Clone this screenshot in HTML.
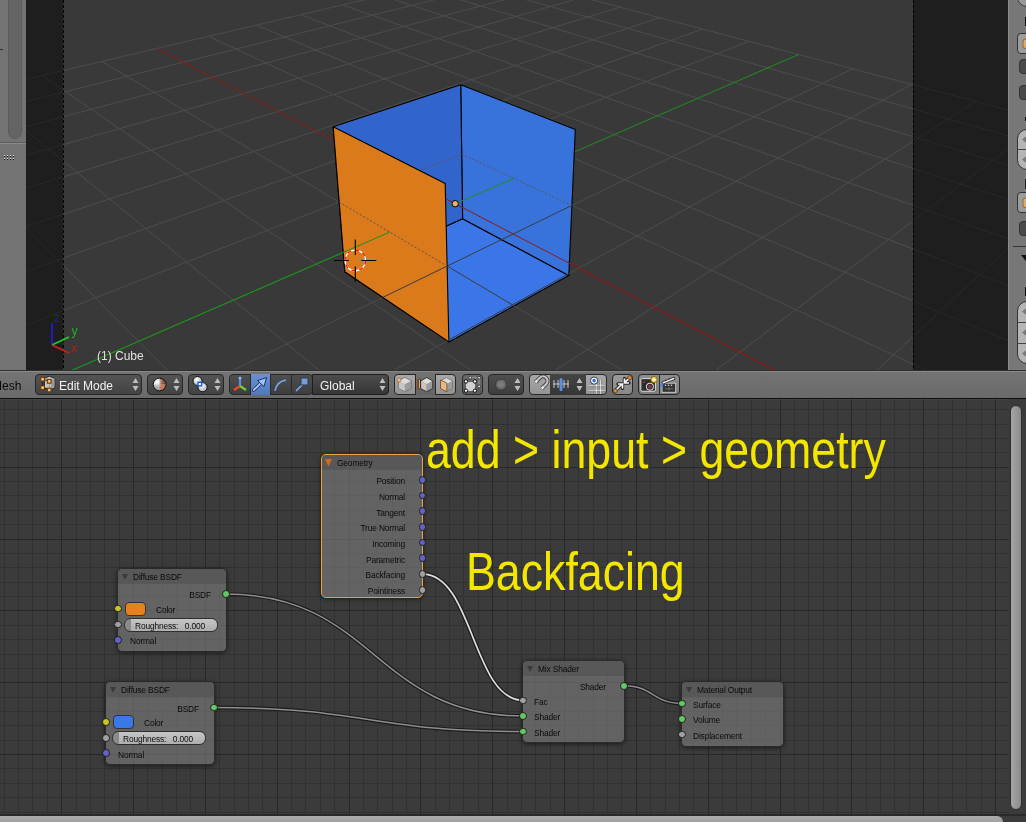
<!DOCTYPE html>
<html><head><meta charset="utf-8"><style>
*{box-sizing:border-box}
body{margin:0;width:1026px;height:822px;overflow:hidden;position:relative;background:#3b3b3b;font-family:"Liberation Sans",sans-serif}
.abs{position:absolute}
.btn{border:1px solid #262626}
.sock{border-radius:50%;border:1px solid #1e1e1e}
.lbl{font-size:8.4px;line-height:10px;letter-spacing:-0.15px;white-space:nowrap;will-change:transform}
.node{border-radius:5px;background:rgba(125,125,125,0.62);box-shadow:0 1px 4px rgba(0,0,0,0.55)}
.nhead{background:rgba(80,80,80,0.55);border-radius:4px 4px 0 0}
.rough{border-radius:6.3px;background:linear-gradient(90deg,#8a8a8a 0 6px,transparent 6px),linear-gradient(#c6c6c6,#aeaeae);border:1px solid #2e2e2e}
.ytxt{font-size:54px;line-height:60px;color:#f3e700;white-space:nowrap;transform-origin:0 0;transform:scaleX(0.828)}
.rp{left:8px;width:30px;border-radius:4px;border:1px solid #333}
.light{background:#9c9c9c}
.dark{background:#4a4a4a}
.num{background:#b5b5b5;border-radius:10px}
</style></head><body>
<svg width="1026" height="370" style="position:absolute;left:0;top:0;will-change:transform">
<defs><clipPath id="silc"><path d="M333.2 126.8L460.7 84.7L575.3 129.6L568.8 275.4L448.9 341.9L344.8 271.8Z"/></clipPath></defs>
<rect width="1026" height="370" fill="#393939"/>
<g stroke="#4d4d4d" stroke-width="1" fill="none"><path d="M-451.4 191.2L101.8 61.4M101.8 61.4L208.6 36.3M208.6 36.3L485.3 -28.6M-451.4 191.2L-430.9 504.6M-430.9 504.6L-418.9 687.5M-418.9 687.5L-146.3 4841.2M-449.6 219.8L127.0 76.3M127.0 76.3L236.1 49.1M236.1 49.1L515.8 -20.5M-348.3 167.0L-267.1 440.3M-267.1 440.3L-222.1 591.8M-222.1 591.8L484.3 2969.4M-447.4 252.1L154.4 92.5M154.4 92.5L265.9 63.0M265.9 63.0L548.3 -11.9M-255.2 145.1L-128.0 385.7M-128.0 385.7L-60.6 513.2M-60.6 513.2L777.6 2098.9M-445.0 288.8L184.4 110.3M184.4 110.3L298.3 78.1M298.3 78.1L583.0 -2.7M-170.6 125.3L-8.4 338.7M-8.4 338.7L74.3 447.5M74.3 447.5L947.1 1595.7M-442.3 330.9L217.4 129.9M217.4 129.9L333.6 94.5M333.6 94.5L620.1 7.2M-93.5 107.2L95.5 297.8M95.5 297.8L188.7 391.8M188.7 391.8L1057.5 1267.9M-439.1 379.6L253.8 151.5M253.8 151.5L372.2 112.5M372.2 112.5L659.9 17.7M-22.9 90.6L186.7 262.0M186.7 262.0L287.0 344.0M287.0 344.0L1135.2 1037.4M-435.3 436.8L294.2 175.4M294.2 175.4L414.7 132.2M414.7 132.2L702.7 29.0M42.0 75.4L267.4 230.3M267.4 230.3L372.3 302.5M372.3 302.5L1192.8 866.4M-430.9 504.6L339.2 202.1M339.2 202.1L461.6 154.0M461.6 154.0L748.8 41.3M101.8 61.4L339.2 202.1M339.2 202.1L447.1 266.1M447.1 266.1L1237.2 734.6M-418.9 687.5L447.1 266.1M447.1 266.1L571.9 205.4M571.9 205.4L852.6 68.8M208.6 36.3L461.6 154.0M461.6 154.0L571.9 205.4M571.9 205.4L1301.2 544.6M-410.5 814.8L512.4 304.8M512.4 304.8L637.3 235.8M637.3 235.8L911.4 84.4M256.4 25.1L514.2 133.4M514.2 133.4L624.6 179.7M624.6 179.7L1325.0 473.9M-399.7 980.5L587.6 349.4M587.6 349.4L711.4 270.2M711.4 270.2L975.5 101.4M301.0 14.7L562.1 114.6M562.1 114.6L672.0 156.7M672.0 156.7L1345.1 414.3M-384.9 1205.0L675.0 401.3M675.0 401.3L796.0 309.6M796.0 309.6L1045.9 120.0M342.6 4.9L605.8 97.4M605.8 97.4L715.0 135.8M715.0 135.8L1362.3 363.3M-363.8 1526.2L778.1 462.3M778.1 462.3L893.4 354.9M893.4 354.9L1123.4 140.6M381.7 -4.3L646.0 81.6M646.0 81.6L754.0 116.7M754.0 116.7L1377.1 319.3M-331.2 2023.9L901.2 535.4M901.2 535.4L1006.9 407.7M1006.9 407.7L1209.2 163.3M418.3 -12.9L683.0 67.1M683.0 67.1L789.7 99.4M789.7 99.4L1390.1 280.9M-273.8 2898.8L1051.0 624.2M1051.0 624.2L1140.8 470.0M1140.8 470.0L1304.7 188.6M452.8 -21.0L717.1 53.7M717.1 53.7L822.5 83.4M822.5 83.4L1401.5 247.0M-146.3 4841.2L1237.2 734.6M1237.2 734.6L1301.2 544.6M1301.2 544.6L1411.6 217.0M485.3 -28.6L748.8 41.3M748.8 41.3L852.6 68.8M852.6 68.8L1411.6 217.0"/></g>
<path d="M157.2 48.4L403.6 176.8M403.6 176.8L513.2 234.0M513.2 234.0L1272.5 629.8" stroke="#8e1a1a" stroke-width="1"/>
<path d="M-425.5 586.6L389.8 232.1M389.8 232.1L513.7 178.3M513.7 178.3L798.6 54.5" stroke="#1f8f1f" stroke-width="1"/>
<g stroke="#000" stroke-width="1.1" stroke-linejoin="round">
<path d="M344.8 271.8L462.6 218.7L568.8 275.4L448.9 341.9Z" fill="#3b76e8"/>
<path d="M462.6 218.7L568.8 275.4L575.3 129.6L460.7 84.7Z" fill="#3873dc"/>
<path d="M344.8 271.8L462.6 218.7L460.7 84.7L333.2 126.8Z" fill="#3265cb"/>
</g>
<g fill="none" stroke-width="1">
<path d="M447.1 266.1L571.9 205.4" stroke="#3c3c3c"/>
<path d="M339.2 202.1L461.6 154.0M461.6 154.0L571.9 205.4" stroke="#555" stroke-dasharray="2 2"/>
<path d="M403.6 176.8L513.2 234.0" stroke="#8e1a1a"/>
<path d="M389.8 232.1L513.7 178.3" stroke="#1f8f1f"/>
</g>
<path d="M344.8 271.8L448.9 341.9L445.2 183.4L333.2 126.8Z" fill="#da7a1a" stroke="#000" stroke-width="1.1" stroke-linejoin="round"/>
<g fill="none" stroke-width="1">
<path d="M339.2 202.1L447.1 266.1" stroke="#555" stroke-dasharray="2 2"/>
<path d="M-451.4 191.2L101.8 61.4M-451.4 191.2L-430.9 504.6M-430.9 504.6L-418.9 687.5M-418.9 687.5L-146.3 4841.2M-449.6 219.8L127.0 76.3M-348.3 167.0L-267.1 440.3M-267.1 440.3L-222.1 591.8M-222.1 591.8L484.3 2969.4M-447.4 252.1L154.4 92.5M-255.2 145.1L-128.0 385.7M-128.0 385.7L-60.6 513.2M-60.6 513.2L777.6 2098.9M-445.0 288.8L184.4 110.3M-170.6 125.3L-8.4 338.7M-8.4 338.7L74.3 447.5M74.3 447.5L947.1 1595.7M-442.3 330.9L217.4 129.9M-93.5 107.2L95.5 297.8M95.5 297.8L188.7 391.8M188.7 391.8L1057.5 1267.9M-439.1 379.6L253.8 151.5M-22.9 90.6L186.7 262.0M186.7 262.0L287.0 344.0M287.0 344.0L1135.2 1037.4M-435.3 436.8L294.2 175.4M42.0 75.4L267.4 230.3M267.4 230.3L372.3 302.5M372.3 302.5L1192.8 866.4M-430.9 504.6L339.2 202.1M447.1 266.1L1237.2 734.6M-418.9 687.5L447.1 266.1M571.9 205.4L1301.2 544.6M-410.5 814.8L512.4 304.8M512.4 304.8L637.3 235.8M637.3 235.8L911.4 84.4M624.6 179.7L1325.0 473.9M-399.7 980.5L587.6 349.4M587.6 349.4L711.4 270.2M711.4 270.2L975.5 101.4M672.0 156.7L1345.1 414.3M-384.9 1205.0L675.0 401.3M675.0 401.3L796.0 309.6M796.0 309.6L1045.9 120.0M715.0 135.8L1362.3 363.3M-363.8 1526.2L778.1 462.3M778.1 462.3L893.4 354.9M893.4 354.9L1123.4 140.6M754.0 116.7L1377.1 319.3M-331.2 2023.9L901.2 535.4M901.2 535.4L1006.9 407.7M1006.9 407.7L1209.2 163.3M789.7 99.4L1390.1 280.9M-273.8 2898.8L1051.0 624.2M1051.0 624.2L1140.8 470.0M1140.8 470.0L1304.7 188.6M822.5 83.4L1401.5 247.0M-146.3 4841.2L1237.2 734.6M1237.2 734.6L1301.2 544.6M1301.2 544.6L1411.6 217.0M852.6 68.8L1411.6 217.0" stroke="#3c3c3c" clip-path="url(#silc)"/>
<path d="M513.2 234.0L1272.5 629.8" stroke="#8e1a1a"/>
<path d="M-425.5 586.6L389.8 232.1" stroke="#1f8f1f"/>
</g>
<circle cx="455.2" cy="203.7" r="3.2" fill="#f0b070" stroke="#000" stroke-width="1"/>
<g transform="translate(355.3 260.5)">
<circle r="10.3" fill="none" stroke="#fff" stroke-width="1.2"/>
<circle r="10.3" fill="none" stroke="#f00" stroke-width="1.2" stroke-dasharray="4 4"/>
<path d="M-21 0H-6.5M6 0H21M0 -21V-5.5M0 6V21" stroke="#000" stroke-width="1.1"/>
</g>
<rect x="26" y="0" width="37" height="370" fill="rgba(0,0,0,0.475)"/>
<rect x="913" y="0" width="95" height="370" fill="rgba(0,0,0,0.475)"/>
<path d="M63.5 0V370M913.5 0V370" stroke="#000" stroke-width="1" stroke-dasharray="3 2"/>
<g stroke-width="1.6" fill="none">
<path d="M52 345L52 323" stroke="#2020e0"/>
<path d="M52 345L69 337" stroke="#20d020"/>
<path d="M52 345L69 353" stroke="#d02020"/>
</g>
<text x="53.5" y="321.5" font-family="Liberation Sans, sans-serif" font-size="12.5" fill="#1818c8">z</text>
<text x="71.5" y="335" font-family="Liberation Sans, sans-serif" font-size="12.5" fill="#20b020">y</text>
<text x="71" y="351.5" font-family="Liberation Sans, sans-serif" font-size="12.5" fill="#b02020">x</text>
<text x="97" y="360" font-family="Liberation Sans, sans-serif" font-size="12" fill="#e0e0e0">(1) Cube</text>
</svg>
<div class="abs" style="left:0;top:0;width:26px;height:370px;background:#737373">
<div class="abs" style="left:8px;top:-8px;width:14px;height:147px;border-radius:7px;background:#646464;border:1px solid #5c5c5c"></div>
<div class="abs" style="left:0;top:142px;width:26px;height:1px;background:#5c5c5c"></div><div class="abs" style="left:0;top:143px;width:26px;height:1px;background:#8a8a8a"></div>
<div class="abs" style="left:0;top:49px;width:3px;height:1px;background:#333"></div>
<svg class="abs" style="left:0;top:0" width="20" height="170"><rect x="4" y="155" width="1" height="1" fill="#e0e0e0"/><rect x="4" y="156" width="1" height="1" fill="#151515"/><rect x="4" y="158" width="1" height="1" fill="#e0e0e0"/><rect x="4" y="159" width="1" height="1" fill="#151515"/><rect x="7" y="155" width="1" height="1" fill="#e0e0e0"/><rect x="7" y="156" width="1" height="1" fill="#151515"/><rect x="7" y="158" width="1" height="1" fill="#e0e0e0"/><rect x="7" y="159" width="1" height="1" fill="#151515"/><rect x="10" y="155" width="1" height="1" fill="#e0e0e0"/><rect x="10" y="156" width="1" height="1" fill="#151515"/><rect x="10" y="158" width="1" height="1" fill="#e0e0e0"/><rect x="10" y="159" width="1" height="1" fill="#151515"/><rect x="13" y="155" width="1" height="1" fill="#e0e0e0"/><rect x="13" y="156" width="1" height="1" fill="#151515"/><rect x="13" y="158" width="1" height="1" fill="#e0e0e0"/><rect x="13" y="159" width="1" height="1" fill="#151515"/></svg>
</div>
<div class="abs" style="left:1008px;top:0;width:18px;height:370px;background:#777;border-left:1px solid #8c8c8c">
<div class="abs" style="left:8px;top:-14px;width:30px;height:21px;border-radius:10px;border:1px solid #3a3a3a;background:#999"></div>
<div class="abs" style="left:16px;top:17px;width:3px;height:9px;background:#111"></div>
<div class="abs rp light" style="top:33px;height:21px"></div><svg class="abs" style="left:12px;top:37px" width="8" height="13"><path d="M2 3L6 1.5L8 3V11L6 12L2 10.5Z" fill="#e8a860" stroke="#7a5a3a" stroke-width="0.8"/></svg>
<div class="abs rp dark" style="left:10px;top:59px;height:15px"></div>
<div class="abs rp dark" style="left:10px;top:85px;height:15px"></div>
<div class="abs" style="left:16px;top:117px;width:3px;height:4px;background:#111"></div>
<div class="abs rp num" style="top:129px;height:41px"></div>
<div class="abs" style="left:8px;top:149px;width:12px;height:1px;background:#444"></div><svg class="abs" style="left:11px;top:135px" width="7" height="9"><path d="M2 4.5L7 0.5V8.5Z" fill="#7a7a7a"/></svg><svg class="abs" style="left:11px;top:155px" width="7" height="9"><path d="M2 4.5L7 0.5V8.5Z" fill="#7a7a7a"/></svg>
<div class="abs" style="left:16px;top:179px;width:3px;height:10px;background:#222"></div>
<div class="abs rp light" style="top:192px;height:21px"></div><svg class="abs" style="left:12px;top:196px" width="8" height="13"><path d="M2 3L6 1.5L8 3V11L6 12L2 10.5Z" fill="#e8a860" stroke="#7a5a3a" stroke-width="0.8"/></svg>
<div class="abs rp dark" style="left:10px;top:221px;height:15px"></div>
<div class="abs" style="left:4px;top:246px;width:14px;height:1px;background:#333"></div>
<svg class="abs" style="left:12px;top:255px" width="8" height="10"><path d="M0 0H8V10Z" fill="#111"/></svg>
<div class="abs" style="left:16px;top:287px;width:3px;height:9px;background:#111"></div>
<div class="abs rp num" style="top:301px;height:63px"></div>
<div class="abs" style="left:8px;top:322px;width:12px;height:1px;background:#444"></div>
<div class="abs" style="left:8px;top:343px;width:12px;height:1px;background:#444"></div><svg class="abs" style="left:11px;top:307px" width="7" height="9"><path d="M2 4.5L7 0.5V8.5Z" fill="#7a7a7a"/></svg><svg class="abs" style="left:11px;top:328px" width="7" height="9"><path d="M2 4.5L7 0.5V8.5Z" fill="#7a7a7a"/></svg><svg class="abs" style="left:11px;top:349px" width="7" height="9"><path d="M2 4.5L7 0.5V8.5Z" fill="#7a7a7a"/></svg>
</div>
<svg class="abs" style="left:0;top:0" width="1026" height="822">
<rect x="0" y="398" width="1026" height="424" fill="#3b3b3b"/>
<path d="M4.5 399V814M18.5 399V814M32.5 399V814M47.5 399V814M76.5 399V814M90.5 399V814M104.5 399V814M119.5 399V814M147.5 399V814M162.5 399V814M176.5 399V814M190.5 399V814M219.5 399V814M234.5 399V814M248.5 399V814M262.5 399V814M291.5 399V814M305.5 399V814M320.5 399V814M334.5 399V814M363.5 399V814M377.5 399V814M392.5 399V814M406.5 399V814M435.5 399V814M449.5 399V814M463.5 399V814M478.5 399V814M507.5 399V814M521.5 399V814M535.5 399V814M550.5 399V814M578.5 399V814M593.5 399V814M607.5 399V814M621.5 399V814M650.5 399V814M665.5 399V814M679.5 399V814M693.5 399V814M722.5 399V814M736.5 399V814M751.5 399V814M765.5 399V814M794.5 399V814M808.5 399V814M823.5 399V814M837.5 399V814M866.5 399V814M880.5 399V814M894.5 399V814M909.5 399V814M938.5 399V814M952.5 399V814M966.5 399V814M981.5 399V814M0 409.5H1009M0 424.5H1009M0 438.5H1009M0 452.5H1009M0 481.5H1009M0 495.5H1009M0 510.5H1009M0 524.5H1009M0 553.5H1009M0 567.5H1009M0 582.5H1009M0 596.5H1009M0 625.5H1009M0 639.5H1009M0 654.5H1009M0 668.5H1009M0 697.5H1009M0 711.5H1009M0 725.5H1009M0 740.5H1009M0 768.5H1009M0 783.5H1009M0 797.5H1009M0 812.5H1009" stroke="#313131" stroke-width="1"/>
<path d="M61.5 399V814M133.5 399V814M205.5 399V814M277.5 399V814M349.5 399V814M420.5 399V814M492.5 399V814M564.5 399V814M636.5 399V814M708.5 399V814M780.5 399V814M851.5 399V814M923.5 399V814M995.5 399V814M0 467.5H1009M0 539.5H1009M0 610.5H1009M0 682.5H1009M0 754.5H1009" stroke="#282828" stroke-width="1"/>
</svg><svg class="abs" style="left:0;top:0" width="1026" height="822"><path d="M226.2 594.1C374.6 594.1 374.6 716.0 523.0 716.0" stroke="#161616" stroke-width="3.8" fill="none" opacity="0.85"/><path d="M226.2 594.1C374.6 594.1 374.6 716.0 523.0 716.0" stroke="#8e8e8e" stroke-width="1.5" fill="none"/><path d="M213.7 707.5C368.4 707.5 368.4 731.6 523.0 731.6" stroke="#161616" stroke-width="3.8" fill="none" opacity="0.85"/><path d="M213.7 707.5C368.4 707.5 368.4 731.6 523.0 731.6" stroke="#8e8e8e" stroke-width="1.5" fill="none"/><path d="M422.7 574.1C472.9 574.1 472.9 700.3 523.0 700.3" stroke="#161616" stroke-width="4.0" fill="none" opacity="0.85"/><path d="M422.7 574.1C472.9 574.1 472.9 700.3 523.0 700.3" stroke="#dedede" stroke-width="1.7" fill="none"/><path d="M624.3 685.7C653.0 685.7 653.0 703.4 681.8 703.4" stroke="#161616" stroke-width="3.8" fill="none" opacity="0.85"/><path d="M624.3 685.7C653.0 685.7 653.0 703.4 681.8 703.4" stroke="#8e8e8e" stroke-width="1.5" fill="none"/></svg><div class="abs node" style="left:320.8px;top:454.0px;width:102.6px;height:144.1px;border:1px solid #e8a040">
<div class="abs nhead" style="left:0;top:0;width:100%;height:15px"></div>
<svg class="abs" style="left:3.2px;top:4px" width="8" height="9"><path d="M0 0H7L3.5 7.7Z" fill="#d8651e"/></svg>
<div class="abs lbl" style="left:15.3px;top:3.3px;color:#0a0a0a">Geometry</div>
</div><div class="abs lbl" style="left:325.0px;top:476.1px;width:80px;text-align:right;color:#0a0a0a">Position</div><div class="abs sock" style="left:418.7px;top:475.9px;width:7.8px;height:7.8px;background:#6363c7"></div><div class="abs lbl" style="left:325.0px;top:491.8px;width:80px;text-align:right;color:#0a0a0a">Normal</div><div class="abs sock" style="left:418.7px;top:491.6px;width:7.8px;height:7.8px;background:#6363c7"></div><div class="abs lbl" style="left:325.0px;top:507.5px;width:80px;text-align:right;color:#0a0a0a">Tangent</div><div class="abs sock" style="left:418.7px;top:507.3px;width:7.8px;height:7.8px;background:#6363c7"></div><div class="abs lbl" style="left:325.0px;top:523.2px;width:80px;text-align:right;color:#0a0a0a">True Normal</div><div class="abs sock" style="left:418.7px;top:523.0px;width:7.8px;height:7.8px;background:#6363c7"></div><div class="abs lbl" style="left:325.0px;top:538.9px;width:80px;text-align:right;color:#0a0a0a">Incoming</div><div class="abs sock" style="left:418.7px;top:538.7px;width:7.8px;height:7.8px;background:#6363c7"></div><div class="abs lbl" style="left:325.0px;top:554.6px;width:80px;text-align:right;color:#0a0a0a">Parametric</div><div class="abs sock" style="left:418.7px;top:554.4px;width:7.8px;height:7.8px;background:#6363c7"></div><div class="abs lbl" style="left:325.0px;top:570.3px;width:80px;text-align:right;color:#0a0a0a">Backfacing</div><div class="abs sock" style="left:418.7px;top:570.1px;width:7.8px;height:7.8px;background:#a1a1a1"></div><div class="abs lbl" style="left:325.0px;top:586.0px;width:80px;text-align:right;color:#0a0a0a">Pointiness</div><div class="abs sock" style="left:418.7px;top:585.8px;width:7.8px;height:7.8px;background:#a1a1a1"></div><div class="abs node" style="left:116.7px;top:567.9px;width:110.2px;height:83.8px;border:1px solid #2a2a2a">
<div class="abs nhead" style="left:0;top:0;width:100%;height:15px"></div>
<svg class="abs" style="left:4.2px;top:5.3px" width="7" height="7"><path d="M0 0H6.1L3.05 5.8Z" fill="#3a3a3a"/></svg>
<div class="abs lbl" style="left:15.3px;top:3.3px;color:#0a0a0a">Diffuse BSDF</div>
</div><div class="abs lbl" style="left:151.2px;top:590.4px;width:60px;text-align:right;color:#0a0a0a">BSDF</div><div class="abs sock" style="left:222.3px;top:590.2px;width:7.8px;height:7.8px;background:#63c763"></div><div class="abs" style="left:125.0px;top:601.9px;width:20.7px;height:14px;border-radius:4px;background:#e8801c;border:1px solid #333"></div><div class="abs lbl" style="left:156.0px;top:604.7px;color:#0a0a0a">Color</div><div class="abs rough" style="left:124.1px;top:618.1px;width:93.5px;height:14px"></div><div class="abs lbl" style="left:134.7px;top:620.8px;color:#0a0a0a">Roughness:</div><div class="abs lbl" style="left:164.9px;top:620.8px;width:40px;text-align:right;color:#0a0a0a">0.000</div><div class="abs lbl" style="left:130.2px;top:636.4px;color:#0a0a0a">Normal</div><div class="abs sock" style="left:113.8px;top:604.5px;width:7.8px;height:7.8px;background:#c7c729"></div><div class="abs sock" style="left:113.8px;top:620.5px;width:7.8px;height:7.8px;background:#a1a1a1"></div><div class="abs sock" style="left:113.8px;top:636.1px;width:7.8px;height:7.8px;background:#6363c7"></div><div class="abs node" style="left:104.7px;top:681.2px;width:110.2px;height:83.8px;border:1px solid #2a2a2a">
<div class="abs nhead" style="left:0;top:0;width:100%;height:15px"></div>
<svg class="abs" style="left:4.2px;top:5.3px" width="7" height="7"><path d="M0 0H6.1L3.05 5.8Z" fill="#3a3a3a"/></svg>
<div class="abs lbl" style="left:15.3px;top:3.3px;color:#0a0a0a">Diffuse BSDF</div>
</div><div class="abs lbl" style="left:139.2px;top:703.7px;width:60px;text-align:right;color:#0a0a0a">BSDF</div><div class="abs sock" style="left:210.3px;top:703.5px;width:7.8px;height:7.8px;background:#63c763"></div><div class="abs" style="left:113.0px;top:715.2px;width:20.7px;height:14px;border-radius:4px;background:#3a78e8;border:1px solid #333"></div><div class="abs lbl" style="left:144.0px;top:718.0px;color:#0a0a0a">Color</div><div class="abs rough" style="left:112.1px;top:731.4px;width:93.5px;height:14px"></div><div class="abs lbl" style="left:122.7px;top:734.1px;color:#0a0a0a">Roughness:</div><div class="abs lbl" style="left:152.9px;top:734.1px;width:40px;text-align:right;color:#0a0a0a">0.000</div><div class="abs lbl" style="left:118.2px;top:749.7px;color:#0a0a0a">Normal</div><div class="abs sock" style="left:101.8px;top:717.8px;width:7.8px;height:7.8px;background:#c7c729"></div><div class="abs sock" style="left:101.8px;top:733.8px;width:7.8px;height:7.8px;background:#a1a1a1"></div><div class="abs sock" style="left:101.8px;top:749.4px;width:7.8px;height:7.8px;background:#6363c7"></div><div class="abs node" style="left:522.0px;top:659.6px;width:103.3px;height:83.5px;border:1px solid #2a2a2a">
<div class="abs nhead" style="left:0;top:0;width:100%;height:15px"></div>
<svg class="abs" style="left:4.2px;top:5.3px" width="7" height="7"><path d="M0 0H6.1L3.05 5.8Z" fill="#3a3a3a"/></svg>
<div class="abs lbl" style="left:15.3px;top:3.3px;color:#0a0a0a">Mix Shader</div>
</div><div class="abs lbl" style="left:526.0px;top:682.0px;width:80px;text-align:right;color:#0a0a0a">Shader</div><div class="abs sock" style="left:620.4px;top:681.8px;width:7.8px;height:7.8px;background:#63c763"></div><div class="abs lbl" style="left:534.0px;top:696.8px;color:#0a0a0a">Fac</div><div class="abs sock" style="left:519.1px;top:696.6px;width:7.8px;height:7.8px;background:#a1a1a1"></div><div class="abs lbl" style="left:534.0px;top:712.3px;color:#0a0a0a">Shader</div><div class="abs sock" style="left:519.1px;top:712.1px;width:7.8px;height:7.8px;background:#63c763"></div><div class="abs lbl" style="left:534.0px;top:727.9px;color:#0a0a0a">Shader</div><div class="abs sock" style="left:519.1px;top:727.7px;width:7.8px;height:7.8px;background:#63c763"></div><div class="abs node" style="left:680.8px;top:680.6px;width:103.4px;height:66.1px;border:1px solid #2a2a2a">
<div class="abs nhead" style="left:0;top:0;width:100%;height:15px"></div>
<svg class="abs" style="left:4.2px;top:5.3px" width="7" height="7"><path d="M0 0H6.1L3.05 5.8Z" fill="#3a3a3a"/></svg>
<div class="abs lbl" style="left:15.3px;top:3.3px;color:#0a0a0a">Material Output</div>
</div><div class="abs lbl" style="left:693.0px;top:699.7px;color:#0a0a0a">Surface</div><div class="abs sock" style="left:677.9px;top:699.5px;width:7.8px;height:7.8px;background:#63c763"></div><div class="abs lbl" style="left:693.0px;top:715.4px;color:#0a0a0a">Volume</div><div class="abs sock" style="left:677.9px;top:715.2px;width:7.8px;height:7.8px;background:#63c763"></div><div class="abs lbl" style="left:693.0px;top:730.8px;color:#0a0a0a">Displacement</div><div class="abs sock" style="left:677.9px;top:730.6px;width:7.8px;height:7.8px;background:#a1a1a1"></div><div class="abs ytxt" style="left:426px;top:419px">add &gt; input &gt; geometry</div><div class="abs ytxt" style="left:465.5px;top:540.5px">Backfacing</div><div class="abs" style="left:1009px;top:398px;width:17px;height:418px;background:#3b3b3b"></div><div class="abs" style="left:1010px;top:405px;width:12px;height:405px;border-radius:6px;background:linear-gradient(90deg,#a6a6a6,#8a8a8a);border:1px solid #2e2e2e"></div><div class="abs" style="left:0;top:814px;width:1026px;height:2px;background:#2a2a2a"></div><div class="abs" style="left:0;top:816px;width:1003px;height:12px;border-radius:0 6px 6px 0;background:linear-gradient(#acacac,#969696)"></div>
<div class="abs" style="left:0;top:370px;width:1026px;height:28px;background:linear-gradient(#747474,#6a6a6a)">
<div class="abs" style="left:-8.5px;top:9px;font-size:12px;color:#080808;line-height:14px;will-change:transform">Mesh</div><div class="abs btn" style="left:35px;top:4px;width:107px;height:21px;background:linear-gradient(#535353,#434343);border-radius:4px;"></div><svg class="abs" style="left:37.8px;top:4.8px" width="20" height="20">
<defs><radialGradient id="vg"><stop offset="0" stop-color="#ffe2b0"/><stop offset="1" stop-color="#d98a30"/></radialGradient></defs>
<path d="M6.5 3L11.5 1.3L16.8 3.2V12.8L11.5 15L6.5 12.8Z" fill="#c4c4c4" stroke="#1e1e1e" stroke-width="0.9"/>
<path d="M11.5 4.8V15M6.5 3L11.5 4.8L16.8 3.2" stroke="#8a8a8a" stroke-width="0.7" fill="none"/>
<path d="M13 5V13L16.5 11.5V4Z" fill="#9a9a9a"/>
<path d="M4.6 4.2V12.7M4.6 4.2L11.2 6.3M4.6 12.7L11.2 15" stroke="#1a1a1a" stroke-width="0.9"/>
<g fill="url(#vg)" stroke="#6a3800" stroke-width="1"><rect x="2.7" y="2.3" width="3.8" height="3.8"/><rect x="9.3" y="4.4" width="3.8" height="3.8"/><rect x="2.7" y="10.8" width="3.8" height="3.8"/><rect x="9.3" y="13.1" width="3.8" height="3.8"/></g>
</svg><div class="abs" style="left:58.7px;top:8.5px;font-size:12px;color:#f2f2f2;line-height:14px;white-space:nowrap;will-change:transform">Edit Mode</div><svg class="abs" style="left:132px;top:7px" width="7" height="15"><path d="M3.5 1L6.5 6H0.5Z M3.5 14L6.5 9H0.5Z" fill="#bdbdbd"/></svg><div class="abs btn" style="left:147px;top:4px;width:36px;height:21px;background:linear-gradient(#535353,#434343);border-radius:4px;"></div><svg class="abs" style="left:151px;top:6px" width="18" height="18">
<defs><radialGradient id="sph" cx="0.3" cy="0.3" r="0.8"><stop offset="0" stop-color="#fff" stop-opacity="0.9"/><stop offset="0.6" stop-color="#fff" stop-opacity="0"/></radialGradient></defs>
<circle cx="8.6" cy="8.5" r="6.4" fill="#9a9a9a"/>
<path d="M8.6 8.5V2.1A6.4 6.4 0 0 0 2.2 8.5Z" fill="#d8d8d8"/>
<path d="M8.6 8.5H15A6.4 6.4 0 0 0 8.6 2.1Z" fill="#8a5248"/>
<path d="M8.6 8.5V14.9A6.4 6.4 0 0 0 15 8.5Z" fill="#c8785a"/>
<path d="M8.6 8.5H2.2A6.4 6.4 0 0 0 8.6 14.9Z" fill="#a8a8a8"/>
<circle cx="8.6" cy="8.5" r="6.4" fill="url(#sph)" stroke="#111" stroke-width="1"/>
</svg><svg class="abs" style="left:173px;top:7px" width="7" height="15"><path d="M3.5 1L6.5 6H0.5Z M3.5 14L6.5 9H0.5Z" fill="#bdbdbd"/></svg><div class="abs btn" style="left:188px;top:4px;width:36px;height:21px;background:linear-gradient(#535353,#434343);border-radius:4px;"></div><svg class="abs" style="left:190px;top:5px" width="20" height="20">
<defs><radialGradient id="pv" cx="0.4" cy="0.35" r="0.7"><stop offset="0" stop-color="#fff"/><stop offset="1" stop-color="#a8a8a8"/></radialGradient></defs>
<circle cx="7.5" cy="6" r="4.5" fill="url(#pv)" stroke="#111" stroke-width="1"/>
<circle cx="12.6" cy="12.2" r="4.6" fill="url(#pv)" stroke="#111" stroke-width="1"/>
<rect x="8" y="7.3" width="3.6" height="3.6" fill="#fff" stroke="#1a60e0" stroke-width="1.4"/>
</svg><svg class="abs" style="left:214px;top:7px" width="7" height="15"><path d="M3.5 1L6.5 6H0.5Z M3.5 14L6.5 9H0.5Z" fill="#bdbdbd"/></svg><div class="abs btn" style="left:229px;top:4px;width:84px;height:21px;background:linear-gradient(#4e4e4e,#3e3e3e);border-radius:4px;"></div><div class="abs" style="left:249.5px;top:4px;width:21px;height:21px;background:linear-gradient(#6a92d2,#5078bc)"></div><div class="abs" style="left:249.5px;top:4px;width:1px;height:21px;background:#2a2a2a"></div><div class="abs" style="left:270px;top:4px;width:1px;height:21px;background:#2a2a2a"></div><div class="abs" style="left:291px;top:4px;width:1px;height:21px;background:#2a2a2a"></div><svg class="abs" style="left:230px;top:4px" width="84" height="21">
<path d="M10 12V4" stroke="#5b8ee8" stroke-width="2.2"/><circle cx="10" cy="4" r="1.5" fill="#8ab0f0"/>
<path d="M10 12L4 16" stroke="#e84a2a" stroke-width="2.2"/><path d="M10 12L16 16" stroke="#6ad03a" stroke-width="2.2"/>
<path d="M23.7 16L31 9" stroke="#1a3060" stroke-width="3.4" stroke-linecap="round"/><path d="M23.7 16L31 9" stroke="#a8c8f8" stroke-width="1.8" stroke-linecap="round"/><path d="M36.6 3.6L27.6 6.6L34 12.6Z" fill="#a0c4f8" stroke="#1a3060" stroke-width="1" stroke-linejoin="round"/>
<path d="M45 17Q46 8 56 6" stroke="#2a3a55" stroke-width="3.2" fill="none"/><path d="M45 17Q46 8 56 6" stroke="#7b9ccc" stroke-width="1.8" fill="none"/>
<path d="M66 17L73 10" stroke="#2a3a55" stroke-width="3.2"/><path d="M66 17L73 10" stroke="#7b9ccc" stroke-width="1.8"/><rect x="71" y="4" width="7" height="7" fill="#7b9ccc" stroke="#2a3a55" stroke-width="1"/>
</svg><div class="abs" style="left:312px;top:4px;width:77px;height:21px;background:linear-gradient(#4c4c4c,#363636);border-radius:0 4px 4px 0;border:1px solid #1e1e1e"></div><div class="abs" style="left:320px;top:8.5px;font-size:12px;color:#f2f2f2;line-height:14px;will-change:transform">Global</div><svg class="abs" style="left:379px;top:7px" width="7" height="15"><path d="M3.5 1L6.5 6H0.5Z M3.5 14L6.5 9H0.5Z" fill="#bdbdbd"/></svg><div class="abs btn" style="left:394px;top:4px;width:62px;height:21px;background:linear-gradient(#a8a8a8,#949494);border-radius:4px;"></div><div class="abs" style="left:414.5px;top:4px;width:21px;height:21px;background:linear-gradient(#727272,#646464);border-left:1px solid #262626;border-right:1px solid #262626"></div><svg class="abs" style="left:392px;top:4px" width="64" height="21"><polygon points="12.9,3.4 19.5,6.8 12.9,10.2 6.3,6.8" fill="#dcdcdc"/><polygon points="6.3,6.8 12.9,10.2 12.9,17.8 6.3,14.4" fill="#c6c6c6"/><polygon points="19.5,6.8 12.9,10.2 12.9,17.8 19.5,14.4" fill="#9c9c9c"/><polygon points="12.9,3.4 19.5,6.8 19.5,14.4 12.9,17.8 6.3,14.4 6.3,6.8" fill="none" stroke="#777" stroke-width="0.9" stroke-linejoin="round"/><polygon points="34.7,3.6 40.8,6.9 34.7,10.2 28.6,6.9" fill="#dcdcdc"/><polygon points="28.6,6.9 34.7,10.2 34.7,17.8 28.6,14.5" fill="#c6c6c6"/><polygon points="40.8,6.9 34.7,10.2 34.7,17.8 40.8,14.5" fill="#9c9c9c"/><polygon points="34.7,3.6 40.8,6.9 40.8,14.5 34.7,17.8 28.6,14.5 28.6,6.9" fill="none" stroke="#2a2a2a" stroke-width="0.9" stroke-linejoin="round"/><polygon points="54.5,3.6 60.5,6.9 54.5,10.2 48.5,6.9" fill="#dcdcdc"/><polygon points="48.5,6.9 54.5,10.2 54.5,17.8 48.5,14.5" fill="#c6c6c6"/><polygon points="60.5,6.9 54.5,10.2 54.5,17.8 60.5,14.5" fill="#9c9c9c"/><polygon points="54.5,3.6 60.5,6.9 60.5,14.5 54.5,17.8 48.5,14.5 48.5,6.9" fill="none" stroke="#777" stroke-width="0.9" stroke-linejoin="round"/><circle cx="7" cy="6" r="2" fill="#f2c090" stroke="#a86a30" stroke-width="0.8"/><rect x="26.3" y="5.2" width="2.2" height="9.8" rx="0.6" fill="#f0a050" stroke="#3a1a00" stroke-width="0.8"/><path d="M48.5 6L54.8 9V17.7L48.5 14.5Z" fill="#e8b888" stroke="#7a4a1a" stroke-width="0.8"/></svg><div class="abs btn" style="left:462px;top:4px;width:21px;height:21px;background:linear-gradient(#6a6a6a,#5a5a5a);border-radius:4px;"></div><svg class="abs" style="left:462px;top:4px" width="21" height="21"><path d="M6 8H11L13 10V15L11 17H6L4 15V10Z" fill="#d0d0d0"/><path d="M8.2 3.6H17.1V12.5" stroke="#8a8a8a" stroke-width="1.4" fill="none"/><g fill="#fff" stroke="#000" stroke-width="0.9"><circle cx="4" cy="7.4" r="1.7"/><circle cx="12.9" cy="7.4" r="1.7"/><circle cx="4" cy="16.7" r="1.7"/><circle cx="12.9" cy="16.7" r="1.7"/></g><g fill="#e8e8e8" stroke="#222" stroke-width="0.8"><circle cx="8.2" cy="3.6" r="1.4"/><circle cx="17.1" cy="3.8" r="1.4"/><circle cx="17.1" cy="12.5" r="1.4"/></g></svg><div class="abs btn" style="left:488px;top:4px;width:36px;height:21px;background:linear-gradient(#4e4e4e,#3e3e3e);border-radius:4px;"></div><svg class="abs" style="left:492px;top:4px" width="18" height="21"><circle cx="9" cy="10.5" r="5.5" fill="#6a6a6a" stroke="#3a3a3a" stroke-width="1"/><circle cx="9" cy="10.5" r="3" fill="#7c7c7c"/></svg><svg class="abs" style="left:514px;top:7px" width="7" height="15"><path d="M3.5 1L6.5 6H0.5Z M3.5 14L6.5 9H0.5Z" fill="#bdbdbd"/></svg><div class="abs btn" style="left:529px;top:4px;width:78px;height:21px;background:linear-gradient(#a8a8a8,#949494);border-radius:4px;"></div><div class="abs" style="left:550px;top:4px;width:36px;height:21px;background:linear-gradient(#444,#363636)"></div><svg class="abs" style="left:529px;top:4px" width="78" height="21">
<path d="M6.6 8.1L10.8 3.8A4.5 4.5 0 0 1 17.2 10.2L12.9 14.4" stroke="#3a3a3a" stroke-width="3.8" fill="none"/><path d="M6.6 8.1L10.8 3.8A4.5 4.5 0 0 1 17.2 10.2L12.9 14.4" stroke="#c4c4c4" stroke-width="2.2" fill="none"/><path d="M6.6 8.1L8 6.7M12.9 14.4L14.3 13" stroke="#f4f4f4" stroke-width="2.2"/>
<path d="M24 10H40M25 6V14M29 6V14M35 6V14M39 6V14" stroke="#c8c8c8" stroke-width="1"/><rect x="30.5" y="4" width="3" height="13" rx="1.5" fill="#5a90e8"/>
<path d="M59 11.2H76M59 16.2H76M67.2 6V20M71.7 6V20" stroke="#666" stroke-width="2"/><path d="M59 11.2H76M59 16.2H76M67.2 6V20M71.7 6V20" stroke="#f0f0f0" stroke-width="1"/><circle cx="65.1" cy="6.6" r="3.6" fill="#fff" stroke="#1a2a50" stroke-width="0.9"/><circle cx="65.1" cy="6.6" r="1.8" fill="#2a6ad8"/>
</svg><svg class="abs" style="left:576px;top:7px" width="7" height="15"><path d="M3.5 1L6.5 6H0.5Z M3.5 14L6.5 9H0.5Z" fill="#bdbdbd"/></svg><div class="abs btn" style="left:612px;top:4px;width:21px;height:21px;background:linear-gradient(#9a9a9a,#888);border-radius:4px;"></div><svg class="abs" style="left:612px;top:4px" width="21" height="21"><g stroke="#2a2a2a" stroke-width="3.4" fill="none" stroke-linecap="round"><path d="M3.5 16.5L10 10M6 10H10.5V14.5M17.5 3.8L12.5 8.8M12.5 4.5V9H17"/></g><g stroke="#f4f4f4" stroke-width="1.7" fill="none"><path d="M3.5 16.5L10 10M6 10H10.5V14.5M17.5 3.8L12.5 8.8M12.5 4.5V9H17"/></g><circle cx="3.4" cy="16.8" r="1.9" fill="#e89040" stroke="#5a3000" stroke-width="0.7"/><circle cx="17.6" cy="3.6" r="1.9" fill="#e89040" stroke="#5a3000" stroke-width="0.7"/></svg><div class="abs btn" style="left:638px;top:4px;width:42px;height:21px;background:linear-gradient(#8e8e8e,#7e7e7e);border-radius:4px;"></div><div class="abs" style="left:659px;top:4px;width:1px;height:21px;background:#333"></div><svg class="abs" style="left:638px;top:4px" width="42" height="21">
<rect x="2.8" y="4.5" width="14.7" height="12.8" rx="1.5" fill="#3a3a3a" stroke="#e0e0e0" stroke-width="0.9"/>
<rect x="4.5" y="6.5" width="11" height="9" fill="#2a2a2a"/>
<circle cx="11.9" cy="12.7" r="3.6" fill="#2a2a3a" stroke="#e8e8e8" stroke-width="1"/><circle cx="11.9" cy="12.7" r="2" fill="#8a3a3a"/>
<rect x="5.2" y="7.4" width="1.6" height="1.4" fill="#e33"/>
<circle cx="16" cy="5.6" r="3.2" fill="#e8c020" stroke="#6a5000" stroke-width="0.6"/><path d="M16 3.6V7.6M14 5.6H18" stroke="#fff" stroke-width="1.3"/>
<rect x="24" y="9.2" width="13.7" height="9.1" fill="#333" stroke="#cfcfcf" stroke-width="0.9"/>
<path d="M24 8L36.2 3L37 5.3L24.8 10.2Z" fill="#f0f0f0" stroke="#1e1e1e" stroke-width="0.8"/>
<path d="M27 6.8L28.6 6.1M30.5 5.3L32.2 4.6" stroke="#222" stroke-width="1"/>
<rect x="23.3" y="8.8" width="2" height="4.5" rx="0.8" fill="#3a7ae0"/>
<g fill="#ddd"><circle cx="27.5" cy="11.2" r="0.8"/><circle cx="30.5" cy="11.2" r="0.8"/><circle cx="33.5" cy="11.2" r="0.8"/></g>
<path d="M27 14.8H35M31 13V16.6" stroke="#777" stroke-width="0.8"/>
</svg><div class="abs" style="left:0;top:0;width:1026px;height:1px;background:#2e2e2e"></div><div class="abs" style="left:0;top:1px;width:1026px;height:1px;background:#898989"></div><div class="abs" style="left:0;top:28px;width:1026px;height:1px;background:#0e0e0e"></div><div class="abs" style="left:0;top:29px;width:1009px;height:1px;background:rgba(255,255,255,0.05)"></div>
</div>
</body></html>
